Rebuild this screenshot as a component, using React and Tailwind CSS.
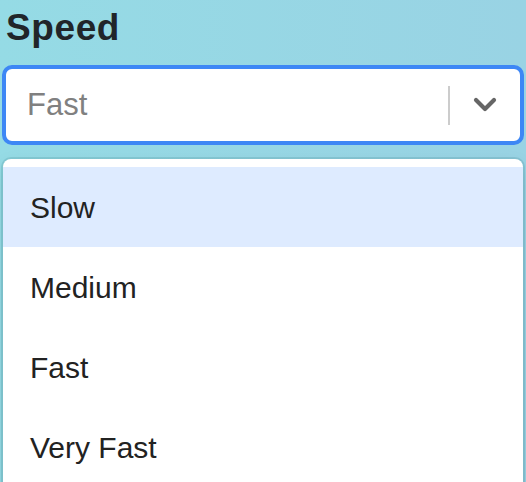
import { useState } from 'react';

const options = ['Slow', 'Medium', 'Fast', 'Very Fast'];

export default function App() {
  const [value] = useState('Fast');
  const [focused] = useState('Slow');

  return (
    <div
      className="h-[482px] w-[526px] overflow-hidden bg-gradient-to-r from-[#95dbe5] to-[#99d3e4] px-[2px]"
      style={{ fontFamily: '"Liberation Sans", Arial, sans-serif' }}
    >
      {/* Label */}
      <div className="pl-[4px] pt-[4px] text-[37px] font-bold leading-[47px] tracking-[0.6px] text-[#212529]">
        Speed
      </div>

      {/* Control */}
      <div className="mt-[14px] flex h-[80px] items-center rounded-[10px] border-4 border-[#3d87f5] bg-white">
        <div className="flex-1 pl-[21px] text-[31px] text-[#808080]">{value}</div>
        <div className="h-[39px] w-[2px] bg-[#cccccc]" />
        <div className="flex w-[70px] items-center justify-center">
          <svg width="24" height="16" viewBox="0 0 24 16">
            <path
              d="M3 3 L12 12 L21 3"
              fill="none"
              stroke="#666666"
              strokeWidth="4.2"
              strokeLinecap="round"
              strokeLinejoin="round"
            />
          </svg>
        </div>
      </div>

      {/* Menu */}
      <div className="mx-[1px] mt-[14px] rounded-[8px] bg-white py-[8px] shadow-[0_0_0_2px_rgba(0,80,90,0.12),0_8px_20px_rgba(0,0,0,0.1)]">
        {options.map((opt) => (
          <div
            key={opt}
            className={`flex h-[80px] items-center px-[27px] text-[30px] text-[#222222] ${
              opt === focused ? 'bg-[#deebff]' : 'bg-white'
            }`}
          >
            {opt}
          </div>
        ))}
      </div>
    </div>
  );
}
